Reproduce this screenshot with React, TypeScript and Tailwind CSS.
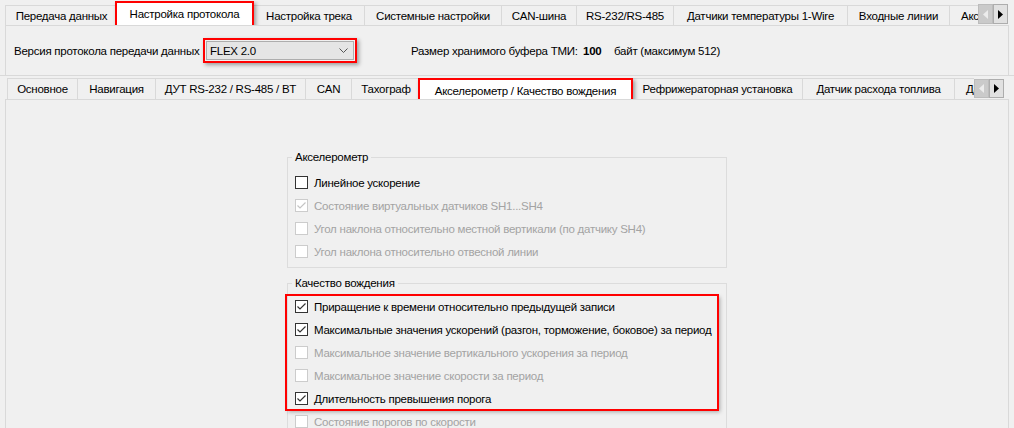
import React from "react";

type Tab = { label: string; w: number; active?: boolean; clip?: boolean };

const topTabs: Tab[] = [
  { label: "Передача данных", w: 113 },
  { label: "Настройка протокола", w: 139, active: true },
  { label: "Настройка трека", w: 111 },
  { label: "Системные настройки", w: 137 },
  { label: "CAN-шина", w: 75 },
  { label: "RS-232/RS-485", w: 97 },
  { label: "Датчики температуры 1-Wire", w: 174 },
  { label: "Входные линии", w: 102 },
  { label: "Акселерометр / Качество вождения", w: 200, clip: true },
];

const subTabs: Tab[] = [
  { label: "Основное", w: 71 },
  { label: "Навигация", w: 78 },
  { label: "ДУТ RS-232 / RS-485 / BT", w: 150 },
  { label: "CAN", w: 46 },
  { label: "Тахограф", w: 69 },
  { label: "Акселерометр / Качество вождения", w: 215, active: true },
  { label: "Рефрижераторная установка", w: 170 },
  { label: "Датчик расхода топлива", w: 152 },
  { label: "Датчик уровня топлива", w: 150, clip: true },
];

const accel = [
  { label: "Линейное ускорение", checked: false, disabled: false },
  { label: "Состояние виртуальных датчиков SH1...SH4", checked: true, disabled: true },
  { label: "Угол наклона относительно местной вертикали (по датчику SH4)", checked: false, disabled: true },
  { label: "Угол наклона относительно отвесной линии", checked: false, disabled: true },
];

const driving = [
  { label: "Приращение к времени относительно предыдущей записи", checked: true, disabled: false },
  { label: "Максимальные значения ускорений (разгон, торможение, боковое) за период", checked: true, disabled: false },
  { label: "Максимальное значение вертикального ускорения за период", checked: false, disabled: true },
  { label: "Максимальное значение скорости за период", checked: false, disabled: true },
  { label: "Длительность превышения порога", checked: true, disabled: false },
];

function Checkbox({ checked, disabled }: { checked: boolean; disabled: boolean }) {
  const edge = disabled ? "#cccccc" : "#333333";
  const mark = disabled ? "#c4c4c4" : "#333333";
  return (
    <svg width="13" height="13" viewBox="0 0 13 13" className="shrink-0">
      <rect x="0.5" y="0.5" width="12" height="12" fill="#ffffff" stroke={edge} />
      {checked && (
        <path d="M2.5 6.5 L5 9 L10.5 3.5" fill="none" stroke={mark} strokeWidth="1.2" />
      )}
    </svg>
  );
}

function Row({ label, checked, disabled }: { label: string; checked: boolean; disabled: boolean }) {
  return (
    <div className="flex h-[23px] items-center gap-[6px]">
      <Checkbox checked={checked} disabled={disabled} />
      <span className={`whitespace-nowrap ${disabled ? "text-[#a3a3a3]" : "text-black"}`}>{label}</span>
    </div>
  );
}

function ScrollButtons({ h }: { h: number }) {
  return (
    <div className="flex shrink-0">
      <div
        className="flex w-[15px] items-center justify-center border border-[#bcbcbc] bg-[#cacaca]"
        style={{ height: h }}
      >
        <svg width="5" height="9" viewBox="0 0 5 9">
          <path d="M5 0 L0 4.5 L5 9 Z" fill="#ececec" />
        </svg>
      </div>
      <div
        className="flex w-[15px] items-center justify-center border border-[#adadad] bg-[#e1e1e1]"
        style={{ height: h }}
      >
        <svg width="5" height="9" viewBox="0 0 5 9">
          <path d="M0 0 L5 4.5 L0 9 Z" fill="#000000" />
        </svg>
      </div>
    </div>
  );
}

function TabStrip({ tabs, activeH, activeDrop, h }: { tabs: Tab[]; activeH: number; activeDrop: string; h: string }) {
  return (
    <div className="flex min-w-0 flex-1 items-end overflow-hidden">
      {tabs.map((t, i) =>
        t.active ? (
          <div
            key={t.label}
            className={`relative z-10 -ml-[3px] flex shrink-0 items-center justify-center whitespace-nowrap border-2 border-[#ff0000] bg-white shadow-[2px_2px_4px_rgba(0,0,0,0.35)] ${activeDrop}`}
            style={{ width: t.w, height: activeH }}
          >
            {t.label}
          </div>
        ) : (
          <div
            key={t.label}
            className={`flex shrink-0 items-center whitespace-nowrap border-t border-r border-[#d9d9d9] bg-[#f0f0f0] ${h} ${
              i === 0 ? "border-l" : ""
            } ${t.clip ? "justify-start pl-[11px]" : "justify-center"}`}
            style={{ width: t.w }}
          >
            {t.label}
          </div>
        )
      )}
    </div>
  );
}

export default function App() {
  return (
    <div
      className="h-[428px] w-[1014px] overflow-hidden bg-[#f0f0f0] text-[11.5px] leading-[14px] tracking-[-0.25px] text-black"
      style={{ fontFamily: '"Liberation Sans", Arial, sans-serif' }}
    >
      {/* top tab control */}
      <div className="border-b border-[#d9d9d9]">
        <div className="flex h-[25px] items-end pl-[5px]">
          <TabStrip tabs={topTabs} activeH={26} activeDrop="-mb-[2px]" h="h-[20px]" />
          <div className="mb-[1px] self-end">
            <ScrollButtons h={20} />
          </div>
          <div className="w-[6px] shrink-0" />
        </div>
        <div className="mx-[5px] flex h-[50px] items-center border-x border-t border-[#d9d9d9] pl-[8px]">
          <span className="w-[189px] shrink-0 whitespace-nowrap">Версия протокола передачи данных</span>
          <div className="w-[154px] shrink-0 border-2 border-[#ff0000] p-[1px] shadow-[2px_2px_4px_rgba(0,0,0,0.35)]">
            <div className="flex h-[19px] items-center justify-between border border-[#adadad] bg-[#e5e5e5] pl-[3px] pr-[5px]">
              <span>FLEX 2.0</span>
              <svg width="9" height="5" viewBox="0 0 9 5">
                <path d="M0.5 0.5 L4.5 4.5 L8.5 0.5" fill="none" stroke="#555555" />
              </svg>
            </div>
          </div>
          <span className="ml-[54px] w-[172px] shrink-0 whitespace-nowrap">Размер хранимого буфера ТМИ:</span>
          <span className="w-[31px] shrink-0 font-bold">100</span>
          <span className="whitespace-nowrap">байт (максимум 512)</span>
        </div>
      </div>

      {/* inner tab control */}
      <div className="mt-[1px] flex h-[22px] items-end pl-[7px]">
        <TabStrip tabs={subTabs} activeH={25} activeDrop="-mb-[4px]" h="h-[21px]" />
        <div className="mb-[1px] self-end">
          <ScrollButtons h={19} />
        </div>
        <div className="w-[10px] shrink-0" />
      </div>
      <div className="mx-[5px] h-[400px] border-x border-t border-[#d9d9d9] pt-[50px]">
        <fieldset className="mx-auto w-[440px] border border-[#dcdcdc] pb-[4px] pl-[7px] pt-[7px]">
          <legend className="-ml-[3px] px-[3px] leading-[14px]">Акселерометр</legend>
          {accel.map((r) => (
            <Row key={r.label} {...r} />
          ))}
        </fieldset>
        <fieldset className="mx-auto mt-[8px] w-[440px] border border-[#dcdcdc] pl-[7px] pt-[5px]">
          <legend className="-ml-[3px] px-[3px] leading-[14px]">Качество вождения</legend>
          <div className="-ml-[9px] w-[432px] pl-[9px] shadow-[2px_2px_4px_rgba(0,0,0,0.3)] outline-2 outline-offset-[-1px] outline-[#ff0000]">
            {driving.map((r) => (
              <Row key={r.label} {...r} />
            ))}
          </div>
          <Row label="Состояние порогов по скорости" checked={false} disabled />
          <Row label="Скорость" checked={false} disabled />
        </fieldset>
      </div>
    </div>
  );
}
